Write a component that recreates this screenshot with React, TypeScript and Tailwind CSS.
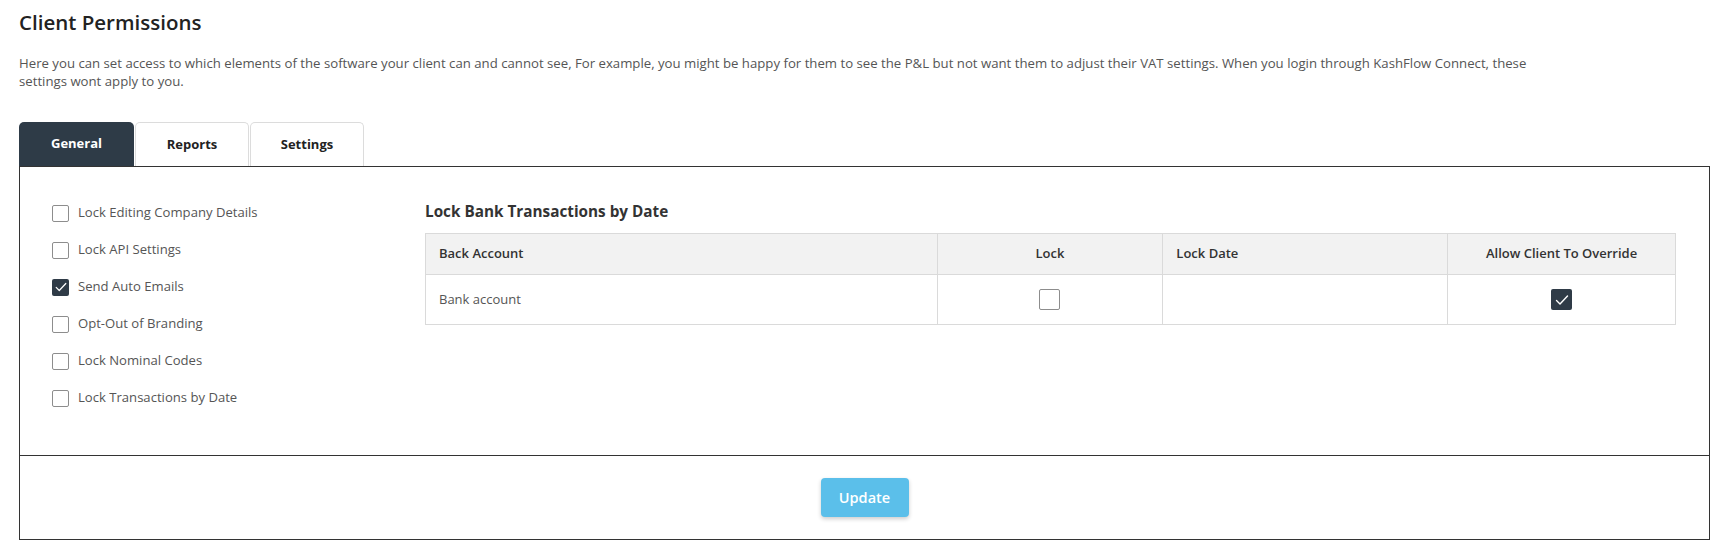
import React from 'react'

const PERMISSIONS = [
  { label: 'Lock Editing Company Details', checked: false },
  { label: 'Lock API Settings', checked: false },
  { label: 'Send Auto Emails', checked: true },
  { label: 'Opt-Out of Branding', checked: false },
  { label: 'Lock Nominal Codes', checked: false },
  { label: 'Lock Transactions by Date', checked: false },
]

const TABS = ['General', 'Reports', 'Settings']

function Check({ checked, size = 'sm' }: { checked: boolean; size?: 'sm' | 'lg' }) {
  const box = size === 'lg' ? 'w-[21px] h-[21px]' : 'w-[17px] h-[17px]'
  if (checked) {
    return (
      <span className={`${box} shrink-0 rounded-[2px] bg-[#2f3b47] flex items-center justify-center`}>
        <svg viewBox="0 0 16 16" className={size === 'lg' ? 'w-[16px] h-[16px]' : 'w-[14px] h-[14px]'} fill="none" stroke="white" strokeWidth="1.4" strokeLinecap="round" strokeLinejoin="round">
          <path d="M2.5 8.5l3.5 3.5L13.5 4" />
        </svg>
      </span>
    )
  }
  return <span className={`${box} shrink-0 rounded-[2px] border border-[#8d8d8d] bg-white`} />
}

export default function App() {
  return (
    <div className="min-h-screen bg-white px-[19px] pt-[9px] pb-[20px] font-['Open_Sans',sans-serif] text-[#333]">
      <h1 className="text-[20.5px] leading-[27px] font-semibold text-[#222]">Client Permissions</h1>
      <p className="mt-[18px] w-[1540px] text-[13.2px] leading-[18px] text-[#555]">
        Here you can set access to which elements of the software your client can and cannot see, For example, you might be happy for them to see the P&amp;L but not want them to adjust their VAT settings. When you login through KashFlow Connect, these settings wont apply to you.
      </p>

      {/* tabs */}
      <div className="mt-[32px] flex gap-[1px]">
        {TABS.map((t, i) => (
          <div
            key={t}
            className={
              i === 0
                ? 'w-[115px] h-[44px] flex items-center justify-center rounded-t-[5px] bg-[#2e3b47] text-white text-[13px] font-bold'
                : 'w-[114px] h-[44px] flex items-center justify-center rounded-t-[5px] border border-b-0 border-[#dcdcdc] bg-white text-[#222] text-[13px] font-bold'
            }
          >
            {t}
          </div>
        ))}
      </div>

      {/* panel */}
      <div className="w-[1691px] border border-[#333]">
        <div className="h-[288px] flex">
          <div className="w-[405px] pl-[32px] pt-[37px] flex flex-col gap-[19px]">
            {PERMISSIONS.map((p) => (
              <label key={p.label} className="flex items-center gap-[9px] h-[18px] text-[13.1px] text-[#555]">
                <Check checked={p.checked} />
                {p.label}
              </label>
            ))}
          </div>

          <div className="pt-[34px] w-[1251px]">
            <h2 className="text-[15.3px] leading-[20px] font-bold text-[#333]">Lock Bank Transactions by Date</h2>
            <table className="mt-[12px] w-[1251px] border-collapse text-[13px]">
              <thead>
                <tr className="h-[41px] bg-[#f2f2f2]">
                  <th className="w-[512px] border border-[#dadada] px-[13px] text-left font-semibold text-[#333]">Back Account</th>
                  <th className="w-[226px] border border-[#dadada] px-[13px] text-center font-semibold text-[#333]">Lock</th>
                  <th className="w-[285px] border border-[#dadada] px-[13px] text-left font-semibold text-[#333]">Lock Date</th>
                  <th className="w-[228px] border border-[#dadada] px-[13px] text-center font-semibold text-[#333]">Allow Client To Override</th>
                </tr>
              </thead>
              <tbody>
                <tr className="h-[50px]">
                  <td className="border border-[#dadada] px-[13px] text-[#555]">Bank account</td>
                  <td className="border border-[#dadada]">
                    <div className="flex justify-center">
                      <Check checked={false} size="lg" />
                    </div>
                  </td>
                  <td className="border border-[#dadada]" />
                  <td className="border border-[#dadada]">
                    <div className="flex justify-center">
                      <Check checked size="lg" />
                    </div>
                  </td>
                </tr>
              </tbody>
            </table>
          </div>
        </div>

        <div className="h-[84px] border-t border-[#333] flex items-center justify-center">
          <button className="w-[88px] h-[39px] rounded-[4px] bg-[#5bbfea] text-white text-[14.5px] font-semibold shadow-[0_2px_4px_rgba(0,0,0,0.2)]">
            Update
          </button>
        </div>
      </div>
    </div>
  )
}
